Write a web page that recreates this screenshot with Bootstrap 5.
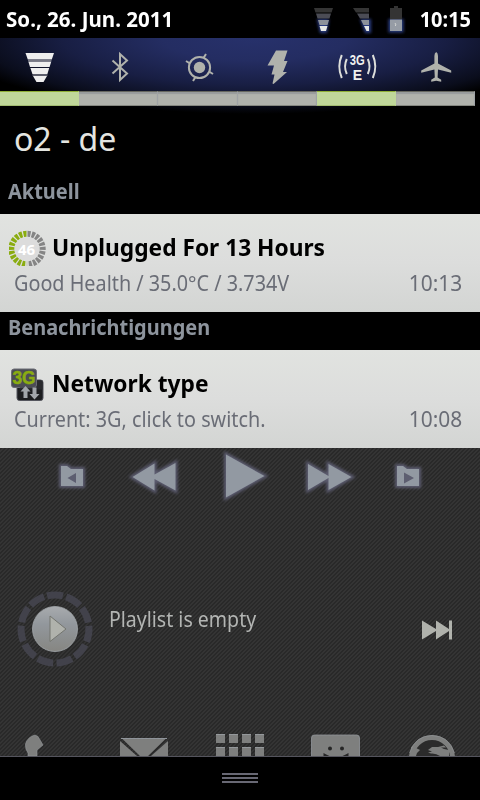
<!DOCTYPE html>
<html lang="de">
<head>
  <meta charset="UTF-8">
  <title>Benachrichtigungen</title>
  <meta name="viewport" content="width=device-width, initial-scale=1">
  <link href="https://cdn.jsdelivr.net/npm/bootstrap@5.3.3/dist/css/bootstrap.min.css" rel="stylesheet">
  <style>
    :root {
      --icon: #b0b2ac;
      --muted: #6a6d76;
      --heading: #8d949d;
    }

    body {
      font-family: "Noto Sans", "Open Sans", sans-serif;
      width: 480px;
      height: 800px;
      background: #000;
      overflow: hidden;
      white-space: nowrap;
    }

    svg { display: block; flex: none; }

    /* narrow letterforms */
    .squeeze {
      display: inline-block;
      transform: scaleX(.9);
      transform-origin: 0 50%;
    }
    .squeeze-end {
      display: inline-block;
      transform: scaleX(.95);
      transform-origin: 100% 50%;
    }
    .notice-title .squeeze { transform: scaleX(.947); }
    .section-title .squeeze { transform: scaleX(.95); }
    .status-date.squeeze { transform: scaleX(.978); }
    .player-text .squeeze { transform: scaleX(.888); }

    .status-bar {
      height: 38px;
      line-height: 39px;
      font-size: 21px;
      font-weight: 700;
      padding: 0 9px 0 6px;
      color: #fff;
    }
    .status-time { width: 54px; text-align: right; margin-left: 11px; }

    .power-panel {
      height: 133px;
      background: radial-gradient(ellipse 310px 76px at 53% 0, #27316b 0, #242d62 30%, #181e43 62%, #0a0d1c 88%, #000 100%);
    }
    .toggles { height: 53px; width: 475px; }
    .toggles > div { flex: 1 1 0; }
    .indicators { width: 475px; height: 15px; }
    .indicators > div {
      flex: 1 1 0;
      background: #b0b2ac;
      border-top: 1px solid #66675f;
      border-right: 1px solid #9fa3a6;
      border-bottom: 1px solid #858780;
      box-shadow: inset 0 2px 1px #989b9c;
    }
    .indicators > .on {
      background: #c0d79a;
      border-color: #8fae35 #c0d79a #a3bc72;
      box-shadow: none;
    }

    .carrier {
      font-size: 32px;
      line-height: 66px;
      padding-left: 14px;
      color: #e4e5e0;
    }

    .section-title {
      font-size: 21px;
      font-weight: 700;
      color: var(--heading);
      padding-left: 8px;
    }
    .section-first { height: 43px; line-height: 41px; }
    .section-next { height: 38px; line-height: 31px; }

    .notice {
      height: 98px;
      padding: 14px 18px 0 9px;
      background: linear-gradient(#e1e3e0, #dcdddc 50%, #d3d5d3);
    }
    .notice-title {
      font-size: 24px;
      font-weight: 700;
      line-height: 38px;
      height: 38px;
      color: #000;
      gap: 6px;
    }
    .notice-text {
      font-size: 22px;
      line-height: 33px;
      color: var(--muted);
      padding-left: 5px;
    }

    .home {
      height: 308px;
      background: linear-gradient(135deg, #292929 25%, #343434 25% 50%, #292929 50% 75%, #343434 75%) 0 0 / 4px 4px;
    }
    .player { margin-top: 82px; height: 78px; padding: 0 27px 0 16px; }
    .player-text {
      font-size: 22px;
      line-height: 30px;
      color: #b3b5b3;
      margin: 13px 0 0 15px;
    }
    .dock { height: 24px; }

    .drag-handle {
      height: 44px;
      border-top: 1px solid #55555e;
      padding-top: 16px;
      gap: 2px;
    }
    .drag-handle span {
      width: 36px;
      height: 2px;
      background: #686874;
    }
  </style>
</head>
<body>

<div class="status-bar d-flex align-items-center">
  <span class="status-date squeeze me-auto">So., 26. Jun. 2011</span>
  <svg width="96" height="38" viewBox="310 0 96 38">
    <defs>
      <filter id="glow" x="-50%" y="-50%" width="200%" height="200%"><feGaussianBlur stdDeviation="1.5"/></filter>
    </defs>
    <path d="M317 19h12l-2 14h-7z M360 19h11v14h-6z M388.500 19h15v13.500h-15z" fill="#2b3c83" filter="url(#glow)"/>
    <path d="M314 8h19l-1.500 4.500h-16z M353 8h16v4.500h-13z" fill="#353535"/>
    <path d="M316 13.500h15l-1.500 5h-12z M357 13.500h12v5h-9z" fill="#4b4c55"/>
    <path d="M318 20h11l-1.500 5h-8z M361 20h8v5h-5.500z" fill="#8c919a"/>
    <path d="M319.500 26h8l-1.500 5h-5z M364 26h5v5h-2.500z" fill="#e5e7e5"/>
    <path d="M394 6h4v2h4v11h-12V8h4z" fill="#343434"/>
    <path d="M390 19.500h12V31h-12z" fill="#969ca5"/>
    <path d="M395 23l1 2-1 1" fill="none" stroke="#d0d2d0"/>
  </svg>
  <div class="status-time"><span class="squeeze-end">10:15</span></div>
</div>

<div class="power-panel">
  <div class="toggles d-flex">
    <div>
      <svg width="79" height="53" viewBox="0 38 79 53">
        <path d="M25.500 53h28.500l-2.200 6.500h-24z M28.300 61.500h23l-1.700 5.500h-19.600z M30.400 68h18.800l-1.800 6h-15z M33 76h14l-3.500 6h-7z" fill="#eeeeee"/>
        <path d="M28 60.500h23.500 M32.500 75h15" stroke="#777884" stroke-width="1.500"/>
      </svg>
    </div>
    <div>
      <svg width="79" height="53" viewBox="79 38 79 53">
        <path d="M112.500 60.500l14.500 13-7 6.500V54l7 6.500-14.500 13" fill="none" stroke="#b0b2ac" stroke-width="2"/>
      </svg>
    </div>
    <div>
      <svg width="79" height="53" viewBox="158 38 79 53">
        <g fill="none" stroke="#b0b2ac" stroke-width="2">
          <circle cx="199.500" cy="67.500" r="10.600"/>
          <path d="M203.500 58l2.500-4 M190 63.500l-4-2.500 M195.500 77l-2.500 4 M209 71.500l4 2.500"/>
        </g>
        <circle cx="199.500" cy="67.500" r="5.700" fill="#b0b2ac"/>
      </svg>
    </div>
    <div>
      <svg width="79" height="53" viewBox="237.500 38 79 53">
        <path d="M275.500 50.500H287l-3.500 10.500h3.500l-4.500 11h4L273 84l-1-.5 2-9h-3l2.500-9H267z" fill="#b0b2ac"/>
      </svg>
    </div>
    <div>
      <svg width="79" height="53" viewBox="316.700 38 79 53">
        <path d="M341.500 55q-5 11.500 0 23 M346.500 59q-3.500 7.500 0 15 M372.500 55q5 11.500 0 23 M367.500 59q3.500 7.500 0 15" fill="none" stroke="#dddeda" stroke-width="2"/>
        <g font-family="Liberation Sans, sans-serif" font-weight="700" font-size="14" fill="#f0f0ee" text-anchor="middle">
          <text x="357" y="65" textLength="15" lengthAdjust="spacingAndGlyphs">3G</text>
          <text x="357" y="80">E</text>
        </g>
      </svg>
    </div>
    <div>
      <svg width="79" height="53" viewBox="395.800 38 79 53">
        <path d="M436 52q1.800 1 1.800 4v7.500l13.200 7v2.300l-13.200-3.300-.4 8 3.600 2.300v2l-5-1-5 1v-2l3.600-2.300-.4-8-13.200 3.300v-2.300l13.200-7V56q0-3 1.800-4z" fill="#b0b2ac"/>
      </svg>
    </div>
  </div>
  <div class="indicators d-flex">
    <div class="on"></div>
    <div></div>
    <div></div>
    <div></div>
    <div class="on"></div>
    <div></div>
  </div>
  <div class="carrier">o2 - de</div>
</div>

<div class="section-title section-first"><span class="squeeze">Aktuell</span></div>
<div class="notice">
  <div class="notice-title d-flex">
    <svg width="37" height="38" viewBox="9 228 37 38">
      <circle cx="27" cy="249" r="12" fill="#dcdcdc"/>
      <g fill="none" stroke-width="6" stroke-dasharray="3.100 1.200">
        <path d="M27.500 233.800a15.200 15.200 0 0 1 0 30.400" stroke="#858585"/>
        <path d="M26.500 233.800a15.200 15.200 0 0 0 0 30.400" stroke="#8aac10"/>
      </g>
      <text x="26.500" y="254.500" font-size="15" font-weight="700" fill="#fff" text-anchor="middle">46</text>
    </svg>
    <span class="squeeze">Unplugged For 13 Hours</span>
  </div>
  <div class="notice-text d-flex justify-content-between">
    <span class="squeeze">Good Health / 35.0°C / 3.734V</span>
    <span class="squeeze-end">10:13</span>
  </div>
</div>

<div class="section-title section-next"><span class="squeeze">Benachrichtigungen</span></div>
<div class="notice">
  <div class="notice-title d-flex">
    <svg width="37" height="38" viewBox="9 364 37 38">
      <rect x="17" y="380" width="26" height="20.500" rx="2.500" fill="#1c1d20" stroke="#55565e"/>
      <rect x="11.500" y="369" width="25" height="18.500" rx="2.500" fill="#4b4c55" stroke="#6b6c75"/>
      <path d="M20 387.500h17v-7h5.500v9H19z" fill="#292a2e"/>
      <text x="24" y="384" font-family="Liberation Sans, sans-serif" font-size="17.500" font-weight="700" fill="#8aac10" stroke="#8aac10" stroke-width=".5" text-anchor="middle" textLength="23" lengthAdjust="spacingAndGlyphs">3G</text>
      <path d="M25.500 386l5 5.500h-3v6.500h-4v-6.500h-3z M34.500 399.500l-5-5.500h3v-6.500h4v6.500h3z" fill="#a2a6ab"/>
    </svg>
    <span class="squeeze">Network type</span>
  </div>
  <div class="notice-text d-flex justify-content-between">
    <span class="squeeze">Current: 3G, click to switch.</span>
    <span class="squeeze-end">10:08</span>
  </div>
</div>

<div class="home d-flex flex-column">
  <svg width="480" height="60" viewBox="0 448 480 60">
    <defs>
      <g id="media">
        <path d="M61 466h6l4 3h12v17H61z"/>
        <path d="M132.500 477l22-13.500v11l21-11.500v27.500l-21-11.500v11.500z"/>
        <path d="M226 454.500l38.500 21.500L226 497.500z"/>
        <path d="M308 464l20.500 12v-12l23 13-23 13v-12l-20.500 12z"/>
        <path d="M397 466h6l4 3h12v17h-22z"/>
      </g>
    </defs>
    <use href="#media" fill="#5b5b70" stroke="#5b5b70" stroke-width="4" filter="url(#glow)"/>
    <use href="#media" fill="#9299a2"/>
    <path d="M76 473v10l-8.500-5z M404 472.500v11l10-5.500z" fill="#5d5e70"/>
  </svg>

  <div class="player d-flex">
    <svg width="78" height="78" viewBox="16 590 78 78">
      <defs>
        <linearGradient id="disc" x2="0" y2="1">
          <stop offset="0" stop-color="#a8abae"/>
          <stop offset=".4" stop-color="#92979c"/>
          <stop offset="1" stop-color="#868682"/>
        </linearGradient>
      </defs>
      <circle cx="55" cy="629" r="34" fill="none" stroke="#42424b" stroke-width="7" stroke-dasharray="16 3.420" transform="rotate(-103.500 55 629)"/>
      <circle cx="55" cy="629" r="22.500" fill="url(#disc)" stroke="#a3a8ac" stroke-width=".8"/>
      <path d="M50 616l16 13-16 12.500z" fill="#b0b2ac" stroke="#73756f"/>
    </svg>
    <div class="player-text me-auto"><span class="squeeze">Playlist is empty</span></div>
    <svg class="mt-4" width="32" height="32" viewBox="421 614 32 32">
      <path d="M422 620.500l14 8.500v-8.500l13 8.500v-8.500h3v19h-3V631l-13 8.500V631l-14 8.500z" fill="#b0b2ac"/>
    </svg>
  </div>

  <div class="dock d-flex mt-auto">
    <svg width="96" height="24" viewBox="0 732 96 24">
      <path d="M28 756v-3q-3-4-2.500-9 2-7 9.500-9l3 1.500 5 8.500-6 5v6z" fill="#7e7f7e" stroke="#93979b" stroke-width=".6"/>
    </svg>
    <svg width="96" height="24" viewBox="96 732 96 24">
      <path d="M122 738.500h44L148 756h-8z M120 741l17 15h-17z M168 741l-17 15h17z" fill="#7e7f7e"/>
      <path d="M121 738.500h46" stroke="#8f949a"/>
    </svg>
    <svg width="96" height="24" viewBox="192 732 96 24">
      <path d="M216 738.500h48M216 751.500h48" stroke="#7e7f7e" stroke-width="9" stroke-dasharray="9 4"/>
      <path d="M216 734.500h48M216 747.500h48" stroke="#94989b" stroke-dasharray="9 4"/>
    </svg>
    <svg width="96" height="24" viewBox="288 732 96 24">
      <rect x="311.500" y="735" width="48" height="30" rx="3" fill="#7e7f7e" stroke="#92969a" stroke-width=".8"/>
      <g fill="#262626">
        <circle cx="330" cy="748.500" r="2"/>
        <circle cx="342" cy="748.500" r="2"/>
        <path d="M323.500 753q2.500 1.500 6 3h-6z M348.500 753q-2.500 1.500-6 3h6z"/>
      </g>
    </svg>
    <svg width="96" height="24" viewBox="384 732 96 24">
      <circle cx="432" cy="758" r="20.500" fill="#2b2b2b" stroke="#7e7f7e" stroke-width="5"/>
      <path d="M411 756v-9l4-2 1 3 4 2-3 3-1 3z M428 750l4-3 6 0 6-1.500 2 2h-5l3 1.500 5 1v6h-9q-4-3-9-2.500l-3-1 4-1z" fill="#7e7f7e"/>
      <path d="M409.500 753q6-17.500 22.500-17.500t22.500 17.500" fill="none" stroke="#93979b" stroke-width=".6"/>
    </svg>
  </div>
</div>

<div class="drag-handle d-flex flex-column align-items-center">
  <span></span>
  <span></span>
  <span></span>
</div>

<script src="https://cdn.jsdelivr.net/npm/bootstrap@5.3.3/dist/js/bootstrap.bundle.min.js"></script>
</body>
</html>
